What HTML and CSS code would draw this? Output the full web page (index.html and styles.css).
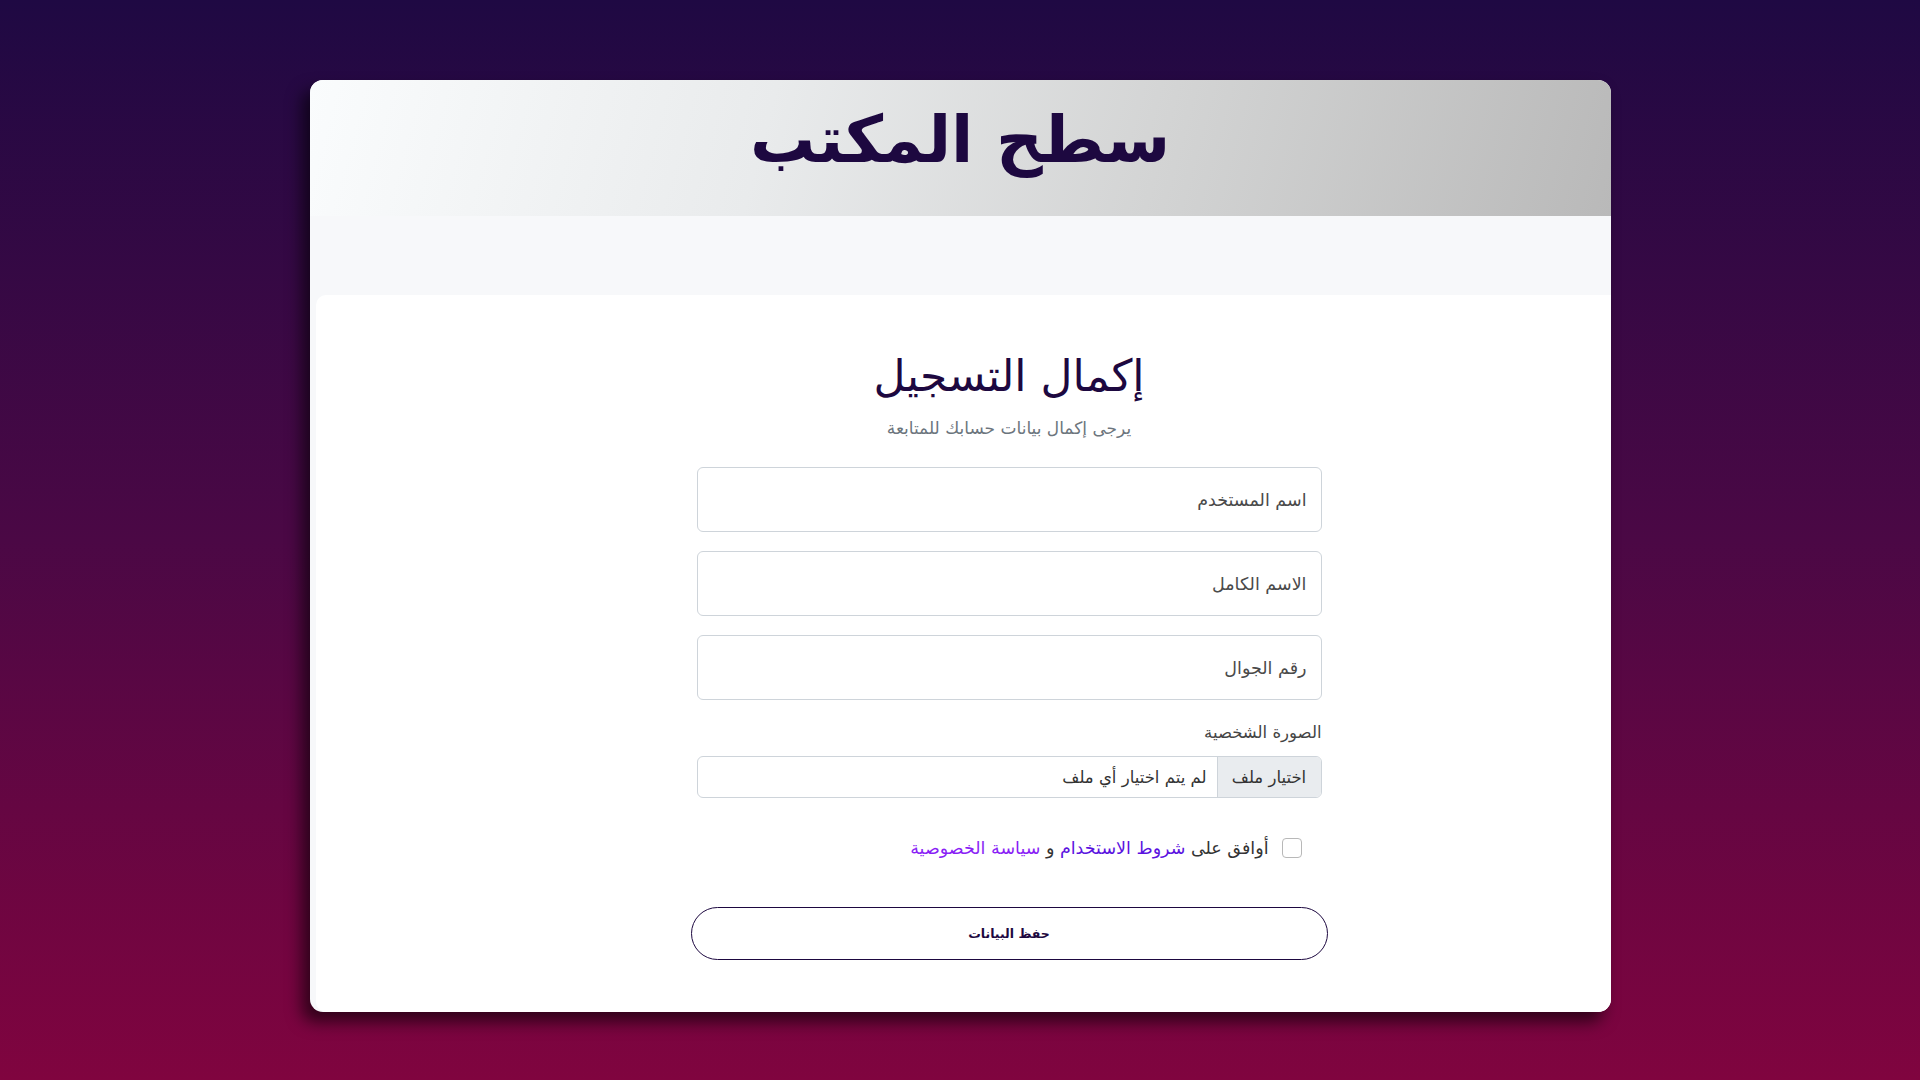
FILE: index.html
```html
<!DOCTYPE html>
<html lang="ar" dir="rtl">
<head>
<meta charset="utf-8">
<title>سطح المكتب</title>
<link rel="stylesheet" href="styles.css">
</head>
<body>
<div class="page">
  <div class="card">
    <header class="card-header">
      <h1 class="brand">سطح المكتب</h1>
    </header>
    <div class="band"></div>
    <main class="panel">
      <form class="form">
        <h2 class="title">إكمال التسجيل</h2>
        <p class="subtitle">يرجى إكمال بيانات حسابك للمتابعة</p>
        <input class="field" type="text" placeholder="اسم المستخدم">
        <input class="field" type="text" placeholder="الاسم الكامل">
        <input class="field" type="text" placeholder="رقم الجوال">
        <label class="label">الصورة الشخصية</label>
        <div class="file">
          <span class="file-btn">اختيار ملف</span>
          <span class="file-name">لم يتم اختيار أي ملف</span>
        </div>
        <div class="agree">
          <input class="check" type="checkbox">
          <span class="agree-text">أوافق على <a class="link1" href="#">شروط الاستخدام</a> و <a class="link2" href="#">سياسة الخصوصية</a></span>
        </div>
        <button class="save" type="button">حفظ البيانات</button>
      </form>
    </main>
  </div>
</div>
</body>
</html>
```
FILE: styles.css
```css
* { box-sizing: border-box; }
html, body { margin: 0; padding: 0; }
body {
  width: 1920px;
  height: 1080px;
  overflow: hidden;
  background: linear-gradient(to bottom, #1f0943 0%, #4b0845 50%, #80043f 100%);
  font-family: "DejaVu Sans", sans-serif;
}
.page {
  display: flex;
  justify-content: center;
  padding-top: 80px;
}
.card {
  width: 1301px;
  height: 932px;
  background: #f7f8fa;
  border-radius: 13px;
  box-shadow: -8px 10px 16px rgba(0, 0, 0, 0.6);
  overflow: hidden;
  display: flex;
  flex-direction: column;
}
.card-header {
  height: 136px;
  background: linear-gradient(105deg, #fafcfd 0%, #e9ebec 35%, #d3d4d4 65%, #b9b9b9 100%);
  display: flex;
  align-items: flex-start;
  justify-content: center;
}
.brand {
  margin: 0;
  font-family: "DejaVu Sans", sans-serif;
  font-weight: bold;
  font-size: 65px;
  color: #1d0840;
  line-height: 1;
  padding-top: 27px;
}
.band { height: 79px; }
.panel {
  flex: 1;
  margin-left: 6px;
  background: #ffffff;
  border-radius: 10px 0 10px 10px;
  display: flex;
  justify-content: center;
  padding-left: 92px;
}
.form {
  width: 625px;
  display: flex;
  flex-direction: column;
  align-items: stretch;
  padding-top: 51px;
}
.title {
  margin: 0;
  text-align: center;
  font-family: "DejaVu Sans", sans-serif;
  font-weight: normal;
  font-size: 44px;
  line-height: 60px;
  color: #1d0840;
}
.subtitle {
  margin: 9px 0 26px;
  text-align: center;
  font-size: 17px;
  line-height: 26px;
  color: #6c757d;
}
.field {
  height: 65px;
  margin-bottom: 19px;
  border: 1px solid #ced4da;
  border-radius: 6px;
  padding: 0 14px;
  font-family: "DejaVu Sans", sans-serif;
  font-size: 17.5px;
  color: #333;
  background: #fff;
  text-align: right;
}
.field::placeholder { color: #4a4a4a; }
.label {
  text-align: right;
  font-size: 16.5px;
  line-height: 22px;
  color: #444;
  margin-top: 3px;
  margin-bottom: 12px;
}
.file {
  height: 42px;
  border: 1px solid #ced4da;
  border-radius: 6px;
  display: flex;
  overflow: hidden;
  font-size: 16.5px;
  color: #333;
}
.file-btn {
  width: 104px;
  background: #e9ecef;
  border-left: 1px solid #ced4da;
  display: flex;
  align-items: center;
  justify-content: center;
}
.file-name {
  display: flex;
  align-items: center;
  padding-right: 10px;
}
.agree {
  display: flex;
  align-items: center;
  justify-content: flex-start;
  gap: 13px;
  margin-top: 40px;
  padding-right: 20px;
  font-size: 17.5px;
  color: #333;
}
.check {
  appearance: none;
  -webkit-appearance: none;
  width: 20px;
  height: 20px;
  margin: 0;
  border: 1.5px solid #b8b8b8;
  border-radius: 4px;
  background: #fff;
  flex: none;
}
.link1 { color: #5b12e0; text-decoration: none; }
.link2 { color: #8a1ff5; text-decoration: none; }
.save {
  margin: 49px -6px 0;
  height: 53px;
  border: 1.5px solid #1d0840;
  border-radius: 27px;
  background: #fff;
  font-family: "DejaVu Sans", sans-serif;
  font-weight: bold;
  font-size: 12.5px;
  color: #1d0840;
}
```
